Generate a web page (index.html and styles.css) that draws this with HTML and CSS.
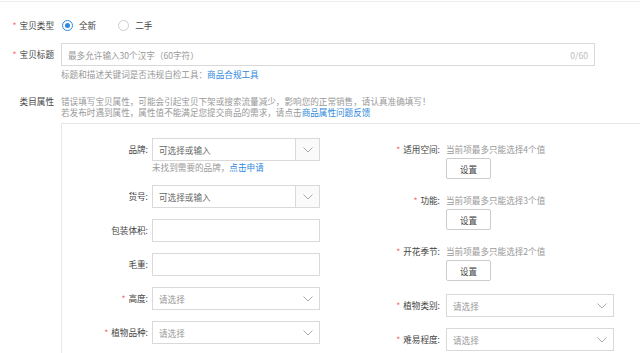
FILE: index.html
```html
<!DOCTYPE html>
<html lang="zh-CN">
<head>
    <meta charset="UTF-8">
    <title>宝贝信息</title>
    <link rel="stylesheet" href="styles.css">
</head>
<body>
    <div class="topline"></div>
    <div class="form">
        <div class="row row-type">
            <div class="label"><span class="req">*</span>宝贝类型</div>
            <div class="field radios">
                <label class="radio-item"><span class="radio checked"></span>全新</label>
                <label class="radio-item"><span class="radio"></span>二手</label>
            </div>
        </div>

        <div class="row row-title">
            <div class="label"><span class="req">*</span>宝贝标题</div>
            <div class="field">
                <div class="text-input title-input">
                    <span class="placeholder">最多允许输入30个汉字（60字符）</span>
                    <span class="count">0/60</span>
                </div>
                <div class="help">标题和描述关键词是否违规自检工具：<a href="#">商品合规工具</a></div>
            </div>
        </div>

        <div class="row row-attr">
            <div class="label">类目属性</div>
            <div class="field">
                <div class="notice">
                    错误填写宝贝属性，可能会引起宝贝下架或搜索流量减少，影响您的正常销售，请认真准确填写！<br>
                    若发布时遇到属性，属性值不能满足您提交商品的需求，请点击<a href="#">商品属性问题反馈</a>
                </div>

                <div class="attr-box">
                    <div class="col col-left">
                        <div class="litem">
                            <div class="ilabel">品牌:</div>
                            <div class="ifield">
                                <div class="select">
                                    <span class="select-text">可选择或输入</span>
                                    <span class="select-arrow boxed">
                                        <svg width="10" height="6" viewBox="0 0 10 6"><polyline points="0.5,0.5 5,5 9.5,0.5" fill="none" stroke="#aaa" stroke-width="1"/></svg>
                                    </span>
                                </div>
                                <div class="ihint">未找到需要的品牌，<a href="#">点击申请</a></div>
                            </div>
                        </div>
                        <div class="litem">
                            <div class="ilabel">货号:</div>
                            <div class="ifield">
                                <div class="select">
                                    <span class="select-text">可选择或输入</span>
                                    <span class="select-arrow boxed">
                                        <svg width="10" height="6" viewBox="0 0 10 6"><polyline points="0.5,0.5 5,5 9.5,0.5" fill="none" stroke="#aaa" stroke-width="1"/></svg>
                                    </span>
                                </div>
                            </div>
                        </div>
                        <div class="litem">
                            <div class="ilabel">包装体积:</div>
                            <div class="ifield"><div class="text-input"></div></div>
                        </div>
                        <div class="litem">
                            <div class="ilabel">毛重:</div>
                            <div class="ifield"><div class="text-input"></div></div>
                        </div>
                        <div class="litem">
                            <div class="ilabel"><span class="req">*</span>高度:</div>
                            <div class="ifield">
                                <div class="select">
                                    <span class="select-text placeholder">请选择</span>
                                    <span class="select-arrow">
                                        <svg width="10" height="6" viewBox="0 0 10 6"><polyline points="0.5,0.5 5,5 9.5,0.5" fill="none" stroke="#aaa" stroke-width="1"/></svg>
                                    </span>
                                </div>
                            </div>
                        </div>
                        <div class="litem">
                            <div class="ilabel"><span class="req">*</span>植物品种:</div>
                            <div class="ifield">
                                <div class="select">
                                    <span class="select-text placeholder">请选择</span>
                                    <span class="select-arrow">
                                        <svg width="10" height="6" viewBox="0 0 10 6"><polyline points="0.5,0.5 5,5 9.5,0.5" fill="none" stroke="#aaa" stroke-width="1"/></svg>
                                    </span>
                                </div>
                            </div>
                        </div>
                    </div>

                    <div class="col col-right">
                        <div class="ritem multi">
                            <div class="rlabel"><span class="req">*</span>适用空间:</div>
                            <div class="rfield">
                                <div class="rhint">当前项最多只能选择4个值</div>
                                <button class="btn">设置</button>
                            </div>
                        </div>
                        <div class="ritem multi">
                            <div class="rlabel"><span class="req">*</span>功能:</div>
                            <div class="rfield">
                                <div class="rhint">当前项最多只能选择3个值</div>
                                <button class="btn">设置</button>
                            </div>
                        </div>
                        <div class="ritem multi">
                            <div class="rlabel"><span class="req">*</span>开花季节:</div>
                            <div class="rfield">
                                <div class="rhint">当前项最多只能选择2个值</div>
                                <button class="btn">设置</button>
                            </div>
                        </div>
                        <div class="ritem single first-single">
                            <div class="rlabel"><span class="req">*</span>植物类别:</div>
                            <div class="rfield">
                                <div class="select">
                                    <span class="select-text placeholder">请选择</span>
                                    <span class="select-arrow">
                                        <svg width="10" height="6" viewBox="0 0 10 6"><polyline points="0.5,0.5 5,5 9.5,0.5" fill="none" stroke="#aaa" stroke-width="1"/></svg>
                                    </span>
                                </div>
                            </div>
                        </div>
                        <div class="ritem single">
                            <div class="rlabel"><span class="req">*</span>难易程度:</div>
                            <div class="rfield">
                                <div class="select">
                                    <span class="select-text placeholder">请选择</span>
                                    <span class="select-arrow">
                                        <svg width="10" height="6" viewBox="0 0 10 6"><polyline points="0.5,0.5 5,5 9.5,0.5" fill="none" stroke="#aaa" stroke-width="1"/></svg>
                                    </span>
                                </div>
                            </div>
                        </div>
                    </div>
                </div>
            </div>
        </div>
    </div>
</body>
</html>
```

FILE: styles.css
```css
body {
    margin: 0;
    width: 640px;
    font-family: "Noto Sans CJK SC", "Noto Sans", sans-serif;
    font-size: 8.6px;
    color: #444;
    background: #fff;
    overflow: hidden;
}
a {
    color: #3089dc;
    text-decoration: none;
}
.topline {
    height: 1px;
    margin-top: 1px;
    background: #ececec;
}
.row {
    display: flex;
}
.label {
    width: 54px;
    margin-right: 7px;
    text-align: right;
    flex-shrink: 0;
    color: #444;
}
.field {
    flex: 1;
}
.req {
    color: #f56c6c;
    margin-right: 3px;
}
.row-type {
    margin-top: 12px;
    height: 22px;
    align-items: center;
}
.radios {
    display: flex;
    align-items: center;
    padding-left: 1px;
}
.radio-item {
    display: flex;
    align-items: center;
    margin-right: 22px;
}
.radio {
    width: 9px;
    height: 9px;
    border: 1px solid #ccc;
    border-radius: 50%;
    margin-right: 6px;
    position: relative;
    background: #fff;
}
.radio.checked {
    border-color: #3089dc;
}
.radio.checked::after {
    content: "";
    position: absolute;
    left: 2px;
    top: 2px;
    width: 5px;
    height: 5px;
    border-radius: 50%;
    background: #3089dc;
}
.row-title {
    margin-top: 7px;
}
.row-title .label {
    line-height: 22px;
}
.text-input {
    height: 21px;
    border: 1px solid #d9d9d9;
    box-sizing: content-box;
    display: flex;
    align-items: center;
    justify-content: space-between;
    padding: 0 6px;
    background: #fff;
}
.title-input {
    width: 520px;
}
.placeholder {
    color: #999;
}
.count {
    color: #bbb;
}
.help {
    margin-top: 2px;
    line-height: 13px;
    color: #999;
}
.row-attr {
    margin-top: 15px;
}
.row-attr .label {
    line-height: 11px;
}
.notice {
    line-height: 11px;
    color: #999;
}
.attr-box {
    margin-top: 5px;
    border-top: 1px solid #e8e8e8;
    border-left: 1px solid #e8e8e8;
    padding-top: 14px;
    display: flex;
}
.col-left {
    width: 258px;
}
.litem {
    display: flex;
    margin-bottom: 11px;
}
.ilabel {
    width: 86px;
    margin-right: 4px;
    text-align: right;
    line-height: 23px;
    color: #444;
}
.ifield {
    width: 168px;
}
.ifield .text-input {
    padding: 0;
    height: 21px;
}
.select {
    height: 21px;
    border: 1px solid #d9d9d9;
    display: flex;
    align-items: center;
    background: #fff;
}
.select-text {
    flex: 1;
    padding-left: 6px;
    color: #666;
}
.select-text.placeholder {
    color: #999;
}
.select-arrow {
    width: 23px;
    height: 21px;
    display: flex;
    align-items: center;
    justify-content: center;
}
.select-arrow.boxed {
    border-left: 1px solid #d9d9d9;
    background: #fafafa;
}
.ihint {
    line-height: 13px;
    color: #999;
}
.col-right {
    margin-left: 20px;
}
.ritem {
    display: flex;
}
.rlabel {
    width: 100px;
    margin-right: 6px;
    text-align: right;
    color: #444;
}
.rfield {
    width: 168px;
}
.ritem.multi {
    margin-bottom: 15px;
}
.ritem.multi:first-child {
    margin-top: 5px;
}
.ritem.multi .rlabel,
.rhint {
    line-height: 13px;
}
.rhint {
    color: #999;
}
.btn {
    display: block;
    margin-top: 2px;
    width: 45px;
    height: 21px;
    padding: 0;
    border: 1px solid #ccc;
    border-radius: 2px;
    background: #fff;
    font-family: inherit;
    font-size: 8.6px;
    color: #444;
}
.ritem.first-single {
    margin-top: -2px;
}
.ritem.single {
    margin-bottom: 11px;
}
.ritem.single .rlabel {
    line-height: 23px;
}
```
